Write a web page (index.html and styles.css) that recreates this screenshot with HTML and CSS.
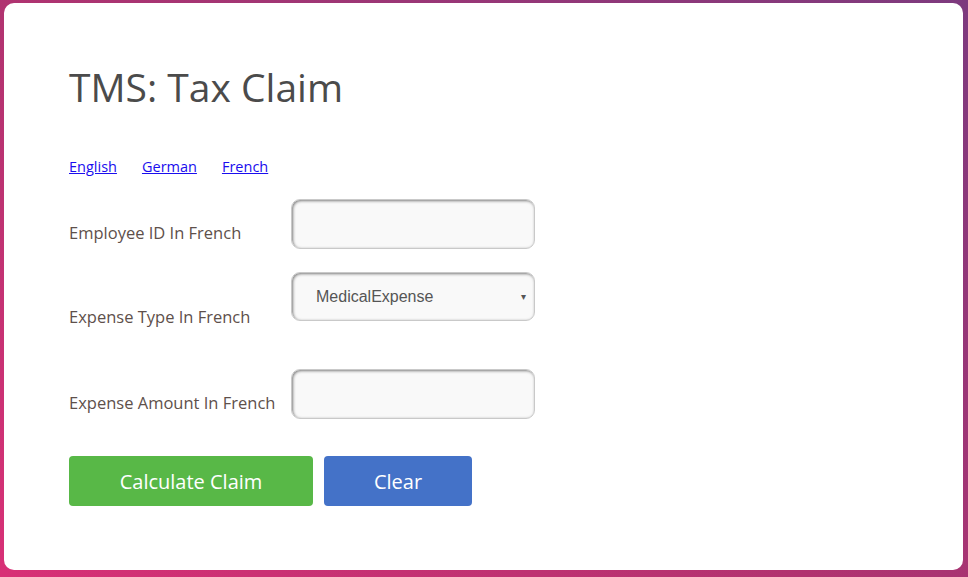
FILE: index.html
```html
<!DOCTYPE html>
<html lang="en">
<head>
<meta charset="utf-8">
<title>TMS: Tax Claim</title>
<link rel="stylesheet" href="styles.css">
</head>
<body>
<main class="card">
  <h1 class="title">TMS: Tax Claim</h1>
  <nav class="langs">
    <a href="#" class="lang">English</a>
    <a href="#" class="lang">German</a>
    <a href="#" class="lang">French</a>
  </nav>
  <form class="form">
    <div class="field field--id">
      <label class="label" for="emp">Employee ID In French</label>
      <input class="control" id="emp" type="text">
    </div>
    <div class="field field--type">
      <label class="label" for="type">Expense Type In French</label>
      <div class="select">
        <span class="select-value">MedicalExpense</span>
        <span class="select-arrow">&#9662;</span>
      </div>
    </div>
    <div class="field field--amount">
      <label class="label" for="amt">Expense Amount In French</label>
      <input class="control" id="amt" type="text">
    </div>
    <div class="actions">
      <button type="button" class="btn btn--calc">Calculate Claim</button>
      <button type="button" class="btn btn--clear">Clear</button>
    </div>
  </form>
</main>
</body>
</html>
```
FILE: styles.css
```css
* { box-sizing: border-box; }
html, body { height: 100%; }
body {
  margin: 0;
  padding: 3px 5px 7px 4px;
  background: linear-gradient(35deg, #d83076 0%, #b13370 45%, #7d3a7e 100%);
  font-family: "Open Sans", "Noto Sans", sans-serif;
}
.card {
  height: 100%;
  background: #fff;
  border-radius: 10px;
  padding: 60px 65px 0;
}
.title {
  margin: 0;
  font-family: "Open Sans", sans-serif;
  font-weight: 400;
  font-size: 39px;
  line-height: 48px;
  color: #4b4b4b;
}
.langs {
  display: flex;
  gap: 25px;
  margin-top: 46px;
  font-size: 14.5px;
  line-height: 20px;
}
.lang { color: #1a0dee; text-decoration: underline; }
.form { margin-top: 22px; }
.field { display: flex; align-items: flex-start; height: 50px; }
.field--type { margin-top: 23px; }
.field--amount { margin-top: 47px; }
.label {
  width: 222px;
  flex: none;
  font-size: 16.5px;
  line-height: 20px;
  color: #5e504b;
  padding-top: 24px;
}
.field--type .label { padding-top: 35px; }
.control, .select {
  width: 244px;
  height: 50px;
  border: 1px solid #c9c9c9;
  border-radius: 9px;
  background: #f9f9f9;
  box-shadow: inset 1px 1px 3px rgba(0,0,0,0.5);
  outline: none;
}
.select {
  height: 49px;
  display: flex;
  align-items: center;
  padding: 0 8px 0 24px;
  font-family: "Liberation Sans", Arial, sans-serif;
  font-size: 16px;
  color: #555;
}
.select-value { flex: 1; }
.select-arrow { font-size: 10px; color: #555; }
.actions { display: flex; gap: 11px; margin-top: 37px; }
.btn {
  height: 50px;
  border: 0;
  border-radius: 4px;
  color: #fff;
  font-family: "Open Sans", sans-serif;
  font-size: 20px;
  font-weight: 500;
  padding: 0;
}
.btn--calc { width: 244px; background: #58b847; }
.btn--clear { width: 148px; background: #4472c8; }
```
